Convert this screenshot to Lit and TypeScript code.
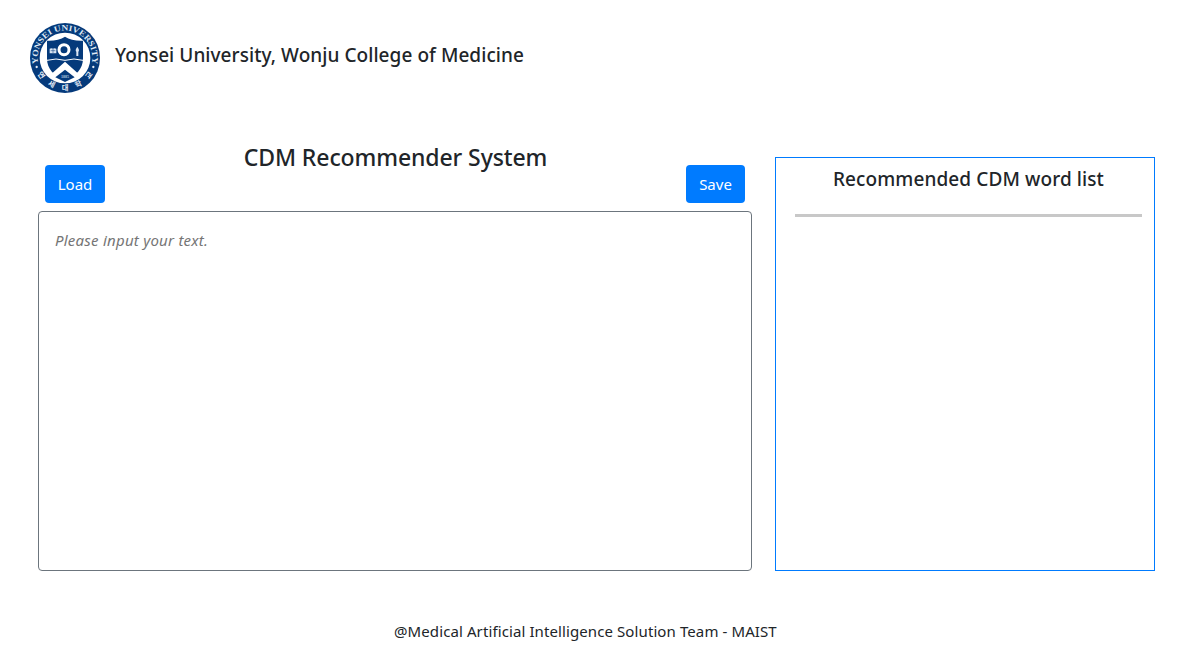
import { LitElement, html, css, svg } from "lit";
import { customElement, state } from "lit/decorators.js";

@customElement("yonsei-emblem")
class YonseiEmblem extends LitElement {
  static styles = css`
    :host { display: block; width: 70px; height: 70px; }
    svg { display: block; width: 100%; height: 100%; }
    .latin { font: 700 25px "Liberation Serif", serif; fill: #dfe8f4; }
    .hangul { font: 700 22px "Noto Sans CJK KR", sans-serif; fill: #e6eef8; text-anchor: middle; }
    .year { font: 700 12px "Liberation Serif", serif; fill: #b8c9e0; text-anchor: middle; }
  `;

  private hangul() {
    const marks: [string, number][] = [["연", 54], ["세", 27], ["대", 0], ["학", -27], ["교", -54]];
    return marks.map(([c, a]) => svg`<text class="hangul" x="105" y="201" transform=${`rotate(${a} 105 105)`}>${c}</text>`);
  }

  render() {
    return html`
      <svg viewBox="0 0 210 210" aria-label="Yonsei University">
        <defs><path id="arc" d="M25.8 126 A82 82 0 1 1 184.2 126" /></defs>
        <circle cx="105" cy="105" r="105" fill="#053a7b" />
        <circle cx="105" cy="105" r="76" fill="#fff" />
        <text class="latin"><textPath href="#arc" startOffset="4" textLength="292" lengthAdjust="spacingAndGlyphs">YONSEI UNIVERSITY</textPath></text>
        <circle cx="20" cy="132" r="3.5" fill="#e6eef8" />
        <circle cx="190" cy="132" r="3.5" fill="#e6eef8" />
        ${this.hangul()}
        <path d="M105 41 C92 50 72 54 51 53 V106 C51 139 72 158 105 174 C138 158 159 139 159 106 V53 C138 54 118 50 105 41Z" fill="#053a7b" />
        <path d="M51 112 Q78 104 105 112 Q132 104 159 112" fill="none" stroke="#fff" stroke-width="3" />
        <path d="M105 116 L146 153 L132 164 L105 143 L78 164 L64 153Z" fill="#fff" />
        <path d="M105 140 L134 163 L105 177 L76 163Z" fill="#053a7b" />
        <text class="year" x="105" y="164">1885</text>
        <circle cx="102" cy="80" r="15" fill="none" stroke="#fff" stroke-width="9" />
        <path d="M59 77 Q65 74 69 77 Q73 74 79 77 V91 H59Z" fill="#dbe5f2" />
        <path d="M69 78 V90 M62 83 H76" stroke="#053a7b" stroke-width="1.5" />
        <path d="M142 71 Q150 82 145 86 V99 H139 V86 Q134 82 142 71Z" fill="#dbe5f2" />
      </svg>`;
  }
}

@customElement("app-root")
class AppRoot extends LitElement {
  @state() private text = "";

  static styles = css`
    :host {
      display: flex; flex-direction: column; box-sizing: border-box;
      width: 1184px; height: 653px; background: #fff; color: #212529;
      font: 400 16px/24px "Noto Sans", sans-serif; overflow: hidden;
    }
    *, *::before { box-sizing: border-box; }
    h1, h2, h3, p { margin: 0; font-weight: 500; white-space: nowrap; }
    header { display: flex; padding: 23px 0 0 30px; height: 145px; gap: 15px; }
    .school { font-size: 19px; line-height: 24px; padding-top: 20px; letter-spacing: 0.06px; }
    main { display: grid; grid-template-columns: 714px 380px; column-gap: 23px; padding-left: 38px; height: 426px; }
    .editor { display: flex; flex-direction: column; }
    .bar { display: grid; grid-template-columns: 60px 1fr 59px; padding: 0 7px; height: 66px; }
    .title { font-size: 23px; line-height: 25px; text-align: center; letter-spacing: -0.1px; }
    .btn {
      margin-top: 20px; height: 38px; padding: 0; border: 0; border-radius: 4px;
      background: #007bff; color: #fff; font: 400 15px/24px "Noto Sans", sans-serif;
    }
    textarea {
      display: block; flex: 1; width: 100%; margin: 0; padding: 16px; resize: none; outline: 0;
      border: 1px solid #6c757d; border-radius: 4px; background: #fff; color: #212529;
      font: 400 15px/24px "Noto Sans", sans-serif;
    }
    textarea::placeholder { color: #757575; font-style: italic; opacity: 1; letter-spacing: 0.24px; }
    .words { margin-top: 12px; border: 1px solid #007bff; padding: 9px 12px 0 19px; }
    .words-title { font-size: 19px; line-height: 24px; text-align: center; letter-spacing: 0.1px; }
    .rule { height: 3px; margin-top: 23px; background: #c8c8c8; }
    footer { padding: 48px 0 0 394px; }
    .team { font-weight: 400; font-size: 15px; letter-spacing: 0.1px; }
  `;

  render() {
    return html`
      <header>
        <yonsei-emblem></yonsei-emblem>
        <h2 class="school">Yonsei University, Wonju College of Medicine</h2>
      </header>
      <main>
        <section class="editor">
          <div class="bar">
            <button class="btn">Load</button>
            <h1 class="title">CDM Recommender System</h1>
            <button class="btn">Save</button>
          </div>
          <textarea placeholder="Please input your text." .value=${this.text}
            @input=${(e: Event) => (this.text = (e.target as HTMLTextAreaElement).value)}></textarea>
        </section>
        <aside class="words">
          <h3 class="words-title">Recommended CDM word list</h3>
          <div class="rule"></div>
        </aside>
      </main>
      <footer><p class="team">@Medical Artificial Intelligence Solution Team - MAIST</p></footer>`;
  }
}
